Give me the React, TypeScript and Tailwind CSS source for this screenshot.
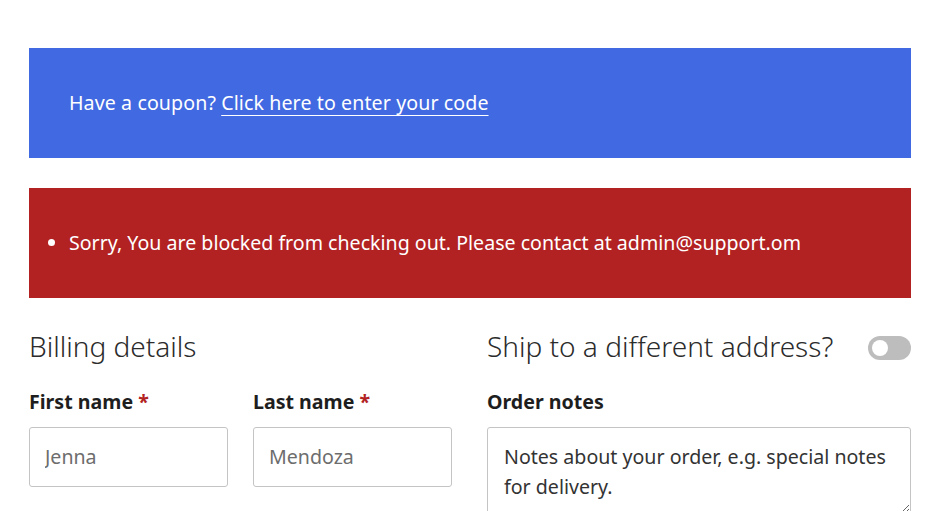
import React from "react";

const font = { fontFamily: '"Noto Sans", "Open Sans", Arial, sans-serif' };

function Field({ label, value }: { label: string; value: string }) {
  return (
    <div className="flex w-[199px] flex-col">
      <label className="h-[24px] text-[19.6px] leading-[24px] font-bold text-[#1e1e1e]">
        {label} <span className="text-[#b22222]">*</span>
      </label>
      <input
        placeholder={value}
        className="mt-[13px] h-[60px] w-full rounded-[3px] border border-[#c4c4c4] px-[15px] pb-[2px] text-[19.6px] text-[#333] outline-none placeholder:text-[#6d6d6d]"
        style={font}
      />
    </div>
  );
}

export default function App() {
  return (
    <div className="min-h-[511px] w-[934px] overflow-hidden bg-white" style={font}>
      <div className="ml-[29px] w-[882px] pt-[48px]">
        <div className="flex h-[110px] items-center bg-[#4169e1] pl-[40px] text-[19.6px] tracking-[0.1px] text-white">
          <span>
            Have a coupon?{" "}
            <a href="#" className="underline decoration-1 underline-offset-[5px]">
              Click here to enter your code
            </a>
          </span>
        </div>

        <div className="mt-[30px] flex h-[110px] items-center bg-[#b22222] text-[19.6px] text-white">
          <ul className="list-disc pl-[40px]">
            <li>Sorry, You are blocked from checking out. Please contact at admin@support.om</li>
          </ul>
        </div>

        <div className="mt-[30px] flex gap-[35px]">
          <div className="w-[423px]">
            <h3 className="h-[40px] text-[28px] leading-[36px] font-light text-[#2b2b2b]">
              Billing details
            </h3>
            <div className="mt-[22px] flex gap-[25px]">
              <Field label="First name" value="Jenna" />
              <Field label="Last name" value="Mendoza" />
            </div>
          </div>

          <div className="w-[424px]">
            <div className="flex h-[40px] items-center justify-between">
              <h3 className="-mt-[4px] text-[28px] leading-[36px] font-light text-[#2b2b2b]">
                Ship to a different address?
              </h3>
              <div className="flex h-[24px] w-[43px] items-center rounded-full bg-[#bdbdbd] px-[4px]">
                <div className="h-[16px] w-[16px] rounded-full bg-white" />
              </div>
            </div>
            <div className="mt-[22px]">
              <div className="h-[24px] text-[19.6px] leading-[24px] font-bold text-[#1e1e1e]">
                Order notes
              </div>
              <textarea
                placeholder="Notes about your order, e.g. special notes for delivery."
                className="mt-[13px] block h-[87px] w-full rounded-[3px] border border-[#c4c4c4] px-[16px] py-[14px] text-[19.6px] leading-[30px] text-[#333] outline-none placeholder:text-[#333]"
                style={font}
              />
            </div>
          </div>
        </div>
      </div>
    </div>
  );
}
